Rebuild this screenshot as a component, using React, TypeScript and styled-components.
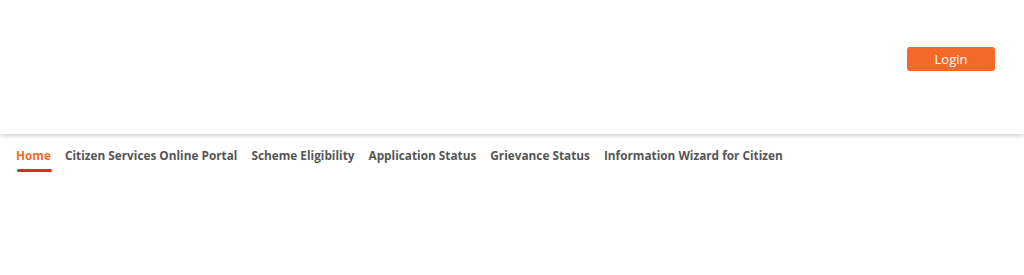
import React from "react";
import styled, { createGlobalStyle } from "styled-components";

const Global = createGlobalStyle`
  html, body { margin: 0; padding: 0; background: #ffffff; }
  body { font-family: "Open Sans", "Liberation Sans", sans-serif; }
`;

const Header = styled.header`
  height: 134px;
  background: #ffffff;
  box-shadow: 0 2px 4px rgba(0, 0, 0, 0.18);
  display: flex;
  justify-content: flex-end;
  align-items: flex-start;
  padding: 47px 29px 0 0;
  box-sizing: border-box;
  position: relative;
  z-index: 1;
`;

const LoginButton = styled.button`
  width: 88px;
  height: 24px;
  border: none;
  border-radius: 3px;
  background: #f4692a;
  color: #ffffff;
  font-family: "Open Sans", "Liberation Sans", sans-serif;
  font-size: 13px;
  line-height: 24px;
  padding: 0;
  cursor: pointer;
`;

const Nav = styled.nav`
  display: flex;
  gap: 14px;
  padding: 13px 16px 0 16px;
`;

const NavItem = styled.a<{ $active?: boolean }>`
  font-family: "Open Sans", "Liberation Sans", sans-serif;
  font-weight: 700;
  font-size: 11.8px;
  line-height: 17px;
  color: ${(p) => (p.$active ? "#f4692a" : "#555555")};
  text-decoration: none;
  padding-bottom: 8px;
  position: relative;
  &::after {
    content: "";
    display: ${(p) => (p.$active ? "block" : "none")};
    position: absolute;
    left: 1px;
    right: -1px;
    bottom: 0;
    height: 3px;
    border-radius: 2px;
    background: #e02b20;
  }
`;

const items = [
  "Home",
  "Citizen Services Online Portal",
  "Scheme Eligibility",
  "Application Status",
  "Grievance Status",
  "Information Wizard for Citizen",
];

export default function App() {
  return (
    <>
      <Global />
      <Header>
        <LoginButton>Login</LoginButton>
      </Header>
      <Nav>
        {items.map((t, i) => (
          <NavItem key={t} $active={i === 0} href="#">
            {t}
          </NavItem>
        ))}
      </Nav>
    </>
  );
}
